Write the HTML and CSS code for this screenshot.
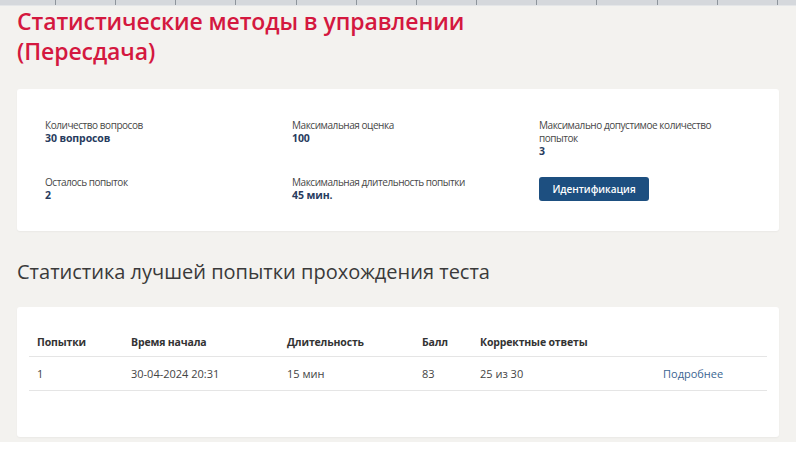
FILE: index.html
```html
<!DOCTYPE html>
<html lang="ru">
<head>
  <meta charset="UTF-8">
  <meta name="viewport" content="width=device-width, initial-scale=1.0">
  <title>Статистические методы в управлении (Пересдача)</title>
  <link rel="stylesheet" href="styles.css">
</head>
<body>
<div class="page">
  <div class="topbar"></div>

  <div class="content">
    <h1 class="test-title">Статистические методы в управлении<br>(Пересдача)</h1>

    <div class="card info-card">
      <div class="info-grid">
        <div class="info-item">
          <div class="info-label">Количество вопросов</div>
          <div class="info-value">30 вопросов</div>
        </div>
        <div class="info-item">
          <div class="info-label">Максимальная оценка</div>
          <div class="info-value">100</div>
        </div>
        <div class="info-item wide-label">
          <div class="info-label">Максимально допустимое количество попыток</div>
          <div class="info-value">3</div>
        </div>
        <div class="info-item">
          <div class="info-label">Осталось попыток</div>
          <div class="info-value">2</div>
        </div>
        <div class="info-item">
          <div class="info-label">Максимальная длительность попытки</div>
          <div class="info-value">45 мин.</div>
        </div>
        <div class="info-item">
          <button class="ident-button">Идентификация</button>
        </div>
      </div>
    </div>

    <h2 class="section-title">Статистика лучшей попытки прохождения теста</h2>

    <div class="card table-card">
      <table class="attempts">
        <thead>
        <tr>
          <th class="col-num">Попытки</th>
          <th class="col-start">Время начала</th>
          <th class="col-dur">Длительность</th>
          <th class="col-score">Балл</th>
          <th class="col-correct">Корректные ответы</th>
          <th class="col-link"></th>
        </tr>
        </thead>
        <tbody>
        <tr>
          <td>1</td>
          <td>30-04-2024 20:31</td>
          <td>15 мин</td>
          <td>83</td>
          <td>25 из 30</td>
          <td><a href="#" class="details-link">Подробнее</a></td>
        </tr>
        </tbody>
      </table>
    </div>
  </div>
</div>
</body>
</html>
```

FILE: styles.css
```css
body {
  margin: 0;
  background-color: #ffffff;
  font-family: 'Open Sans', 'Noto Sans', sans-serif;
}
.page {
  width: 796px;
  height: 442px;
  background-color: #f3f2ef;
  overflow: hidden;
}
.topbar {
  height: 5px;
  background-color: #d5d8dc;
  background-image: repeating-linear-gradient(to right, transparent 0 55px, #8e959c 55px 56px, transparent 56px 60.15px);
  border-bottom: 1px solid #e4e6e8;
}
.content {
  padding: 0 17px;
}
.test-title {
  margin: 0 0 23px;
  color: #d4183f;
  font-size: 23px;
  font-weight: 600;
  line-height: 30px;
  letter-spacing: -0.1px;
}
.card {
  background-color: white;
  border-radius: 3px;
  box-shadow: 0 1px 2px rgba(0,0,0,0.04);
}
.info-card {
  width: 762px;
  box-sizing: border-box;
  padding: 30px 0 30px 28px;
}
.info-grid {
  display: grid;
  grid-template-columns: 247px 247px 1fr;
  row-gap: 19px;
}
.info-item {
  padding-right: 40px;
}
.wide-label .info-label {
  max-width: 190px;
}
.info-label {
  font-size: 10px;
  line-height: 13px;
  letter-spacing: -0.45px;
  color: #474747;
}
.info-value {
  font-size: 10.5px;
  line-height: 12px;
  font-weight: 700;
  letter-spacing: -0.1px;
  color: #283c5e;
}
.ident-button {
  margin-top: -2px;
  width: 110px;
  height: 24px;
  padding: 0;
  border: none;
  border-radius: 3px;
  background-color: #1d4f80;
  color: white;
  font-family: inherit;
  font-size: 10px;
  font-weight: 600;
  cursor: pointer;
}
.section-title {
  margin: 28px 0 0;
  font-size: 20px;
  font-weight: 400;
  line-height: 26px;
  color: #3a3a3a;
}
.table-card {
  width: 762px;
  box-sizing: border-box;
  margin-top: 22px;
  padding: 16px 12px 46px;
}
.attempts {
  width: 100%;
  table-layout: fixed;
  border-collapse: collapse;
  line-height: 15px;
  color: #444;
}
.attempts th,
.attempts td {
  box-sizing: border-box;
  text-align: left;
  border-bottom: 1px solid #e5e5e5;
}
.attempts th {
  font-size: 10.5px;
  font-weight: 700;
  letter-spacing: -0.15px;
  color: #333;
  padding: 12px 8px 6px;
}
.attempts td {
  font-size: 11px;
  padding: 9px 8px 9px;
}
.col-num { width: 94px; }
.col-start { width: 156px; }
.col-dur { width: 135px; }
.col-score { width: 58px; }
.col-correct { width: 183px; }
.details-link {
  color: #3b6592;
  text-decoration: none;
}
```
